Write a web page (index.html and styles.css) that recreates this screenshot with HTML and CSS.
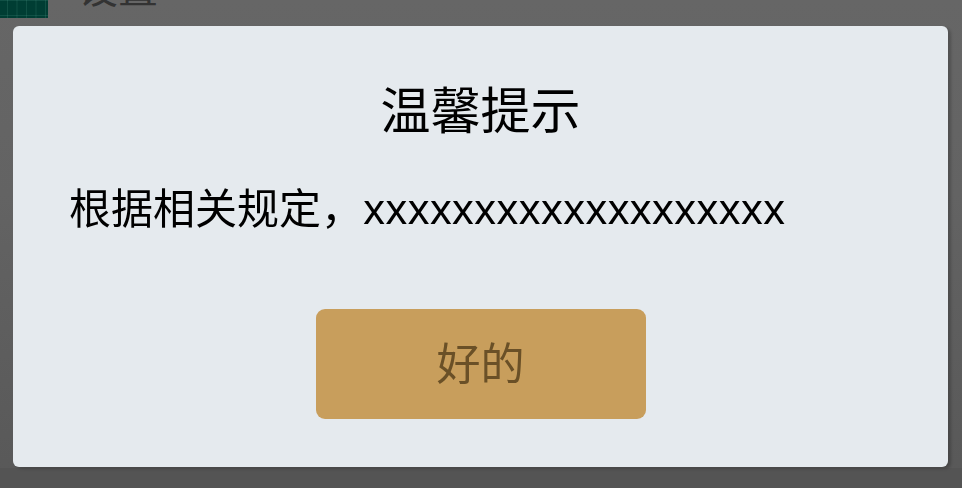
FILE: index.html
```html
<!DOCTYPE html>
<html lang="zh-CN">
<head>
    <meta charset="UTF-8">
    <meta name="viewport" content="width=device-width, initial-scale=1.0">
    <title>温馨提示</title>
    <link rel="stylesheet" href="styles.css">
</head>
<body>

    <div class="page">
        <div class="page-header">
            <div class="thumb"></div>
            <span class="page-title">设置</span>
        </div>
        <div class="page-footer"></div>
    </div>

    <div class="mask">
        <div class="dialog">
            <div class="dialog-title">温馨提示</div>
            <p class="dialog-text">根据相关规定，xxxxxxxxxxxxxxxxxxx</p>
            <div class="dialog-actions">
                <button class="ok-btn">好的</button>
            </div>
        </div>
    </div>

</body>
</html>
```

FILE: styles.css
```css
body {
    margin: 0;
    padding: 0;
    font-family: "Noto Sans", "Noto Sans CJK SC", sans-serif;
    background-color: #666;
    height: 488px;
    overflow: hidden;
}

.page {
    height: 488px;
    display: flex;
    flex-direction: column;
    justify-content: space-between;
    background: linear-gradient(#666 0%, #636363 40%, #585858 100%);
}

.page-header {
    display: flex;
    align-items: flex-end;
    gap: 30px;
    height: 18px;
    overflow: hidden;
}

.thumb {
    width: 48px;
    height: 18px;
    flex-shrink: 0;
    background-color: #003d33;
    background-image:
        linear-gradient(90deg, rgba(120, 200, 180, 0.14) 1px, transparent 1px),
        linear-gradient(rgba(120, 200, 180, 0.14) 1px, transparent 1px);
    background-size: 9.5px 15px;
    background-position: 7px 0, 0 15px;
}

.page-title {
    font-size: 40px;
    line-height: 40px;
    color: #333;
    margin-bottom: 10px;
}

.page-footer {
    height: 20px;
    background-color: #545454;
}

.mask {
    position: fixed;
    top: 0;
    left: 0;
    right: 0;
    bottom: 0;
    padding: 26px 14px 0 13px;
}

.dialog {
    background-color: #e5eaee;
    border-radius: 6px;
    box-shadow: 3px 2px 3px rgba(0, 0, 0, 0.2);
    padding: 52px 56px 48px;
    height: 441px;
    box-sizing: border-box;
    text-align: center;
}

.dialog-title {
    font-size: 50px;
    line-height: 64px;
    color: #000;
}

.dialog-text {
    margin: 38px 0 0;
    font-size: 42px;
    line-height: 56px;
    color: #000;
    text-align: left;
}

.dialog-actions {
    display: flex;
    justify-content: center;
    margin-top: 73px;
}

.ok-btn {
    width: 330px;
    height: 110px;
    border: none;
    border-radius: 9px;
    background-color: #c89e5c;
    color: #6a5027;
    font-family: "Noto Sans", "Noto Sans CJK SC", sans-serif;
    font-size: 44px;
    line-height: 60px;
    padding: 0 0 2px;
    cursor: pointer;
}
```
